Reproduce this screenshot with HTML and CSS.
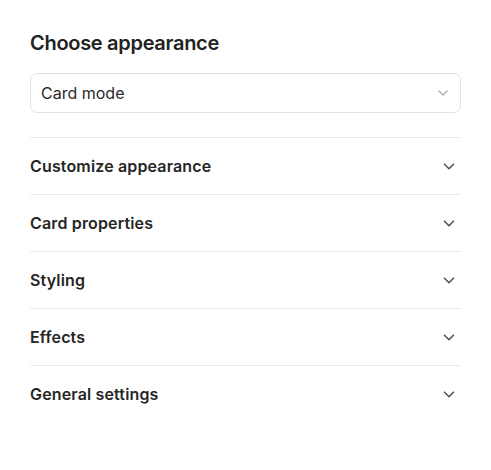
FILE: index.html
```html
<!DOCTYPE html>
<html>
<head>
<meta charset="utf-8">
<link rel="stylesheet" href="styles.css">
</head>
<body>
<div class="panel">
  <h2 class="title">Choose appearance</h2>
  <div class="select">
    <span>Card mode</span>
    <svg class="select-chev" width="10" height="6" viewBox="0 0 10 6"><path d="M1 1l4 4 4-4" fill="none" stroke="currentColor" stroke-width="1.5" stroke-linecap="round" stroke-linejoin="round"/></svg>
  </div>
  <div class="accordion">
    <div class="row"><span>Customize appearance</span><svg class="chev" width="12" height="7" viewBox="0 0 12 7"><path d="M1.5 1.2l4.5 4.5 4.5-4.5" fill="none" stroke="currentColor" stroke-width="1.6" stroke-linecap="round" stroke-linejoin="round"/></svg></div>
    <div class="row"><span>Card properties</span><svg class="chev" width="12" height="7" viewBox="0 0 12 7"><path d="M1.5 1.2l4.5 4.5 4.5-4.5" fill="none" stroke="currentColor" stroke-width="1.6" stroke-linecap="round" stroke-linejoin="round"/></svg></div>
    <div class="row"><span>Styling</span><svg class="chev" width="12" height="7" viewBox="0 0 12 7"><path d="M1.5 1.2l4.5 4.5 4.5-4.5" fill="none" stroke="currentColor" stroke-width="1.6" stroke-linecap="round" stroke-linejoin="round"/></svg></div>
    <div class="row"><span>Effects</span><svg class="chev" width="12" height="7" viewBox="0 0 12 7"><path d="M1.5 1.2l4.5 4.5 4.5-4.5" fill="none" stroke="currentColor" stroke-width="1.6" stroke-linecap="round" stroke-linejoin="round"/></svg></div>
    <div class="row"><span>General settings</span><svg class="chev" width="12" height="7" viewBox="0 0 12 7"><path d="M1.5 1.2l4.5 4.5 4.5-4.5" fill="none" stroke="currentColor" stroke-width="1.6" stroke-linecap="round" stroke-linejoin="round"/></svg></div>
  </div>
</div>
</body>
</html>
```
FILE: styles.css
```css
html, body {
  margin: 0;
  background: #ffffff;
}
body {
  font-family: Inter, "Noto Sans", sans-serif;
  color: #222222;
}
.panel {
  width: 431px;
  padding: 31px 30px 0 30px;
}
.title {
  margin: 0;
  font-size: 20px;
  line-height: 24px;
  font-weight: 600;
  letter-spacing: -0.3px;
  color: #222;
}
.select {
  margin-top: 18px;
  height: 38px;
  border: 1px solid #e2e2e2;
  border-radius: 7px;
  display: flex;
  align-items: center;
  justify-content: space-between;
  padding: 0 12px 0 10px;
  font-size: 16px;
  color: #2a2a2a;
}
.select-chev {
  color: #b3b3b3;
}
.accordion {
  margin-top: 24px;
}
.row {
  height: 56px;
  border-top: 1px solid #ebebeb;
  display: flex;
  align-items: center;
  justify-content: space-between;
  padding-right: 6px;
  font-size: 16px;
  font-weight: 600;
  letter-spacing: 0.15px;
  color: #262626;
}
.chev {
  color: #555;
}
```
